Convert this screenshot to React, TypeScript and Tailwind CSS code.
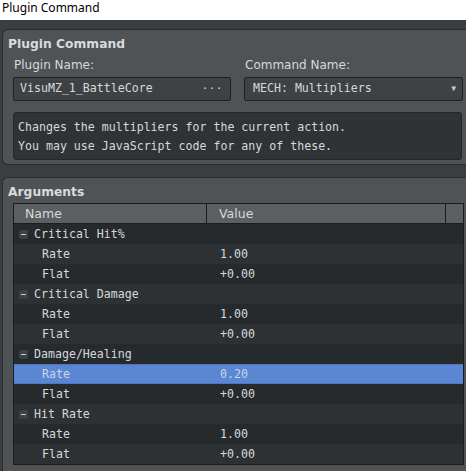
const ui = { fontFamily: '"DejaVu Sans", "Noto Sans", sans-serif' };
const mono = { fontFamily: '"DejaVu Sans Mono", "Liberation Mono", monospace' };

type Row = { name: string; value?: string; group?: boolean; selected?: boolean };

const rows: Row[] = [
  { name: 'Critical Hit%', group: true },
  { name: 'Rate', value: '1.00' },
  { name: 'Flat', value: '+0.00' },
  { name: 'Critical Damage', group: true },
  { name: 'Rate', value: '1.00' },
  { name: 'Flat', value: '+0.00' },
  { name: 'Damage/Healing', group: true },
  { name: 'Rate', value: '0.20', selected: true },
  { name: 'Flat', value: '+0.00' },
  { name: 'Hit Rate', group: true },
  { name: 'Rate', value: '1.00' },
  { name: 'Flat', value: '+0.00' },
];

const Collapse = () => (
  <span className="inline-flex h-[9px] w-[9px] items-center justify-center rounded-[2px] bg-[#3d4245] mr-[6px]">
    <span className="block h-[1px] w-[5px] bg-[#c9cdd0]" />
  </span>
);

export default function App() {
  return (
    <div className="w-[466px] h-[471px] overflow-hidden bg-[#3b3e41] text-[#d6d9db]">
      {/* window title */}
      <div className="h-[20px] bg-white text-black text-[12px] leading-[16px] pl-[2px]" style={{ fontFamily: '"Noto Sans", sans-serif' }}>
        Plugin Command
      </div>

      <div className="pt-[9px] pl-[2px]">
        {/* command group */}
        <div className="h-[136px] rounded-l-[6px] border border-r-0 border-[#2a2d30] bg-[#4f5356] pl-[10px] pr-[3px]" style={ui}>
          <div className="pt-[4px] -ml-[5px] text-[12.3px] font-bold leading-[20px] text-[#d8dbdd]">Plugin Command</div>
          <div className="mt-[1px] flex gap-[13px]">
            <div className="w-[218px]">
              <div className="text-[12px] leading-[20px] pl-[1px]">Plugin Name:</div>
              <div className="mt-[2px] h-[24px] rounded-[2px] border border-[#1e2022] bg-[#3e4245] flex items-center justify-between pl-[6px] pr-[7px] text-[11.6px]" style={mono}>
                <span>VisuMZ_1_BattleCore</span>
                <span className="text-[11px] tracking-[0.5px]">···</span>
              </div>
            </div>
            <div className="w-[219px]">
              <div className="text-[12px] leading-[20px] pl-[1px]">Command Name:</div>
              <div className="mt-[2px] h-[24px] rounded-[2px] border border-[#1e2022] bg-[#3e4245] flex items-center justify-between pl-[8px] pr-[6px] text-[11.6px]" style={mono}>
                <span>MECH: Multipliers</span>
                <span className="text-[8px] text-[#c4c8cb]">▼</span>
              </div>
            </div>
          </div>
          <div className="mt-[11px] mr-[1px] h-[48px] rounded-[3px] border border-[#25282a] bg-[#2f3336] pl-[4px] pt-[5px] text-[11.6px] leading-[19px]" style={mono}>
            <div>Changes the multipliers for the current action.</div>
            <div>You may use JavaScript code for any of these.</div>
          </div>
        </div>

        {/* arguments group */}
        <div className="mt-[12px] h-[300px] rounded-l-[6px] border border-r-0 border-[#2a2d30] bg-[#4f5356] pl-[10px] pr-[3px]" style={ui}>
          <div className="pt-[4px] -ml-[5px] text-[12.3px] font-bold leading-[20px] text-[#d8dbdd]">Arguments</div>
          <div className="mt-[1px] w-[451px] border border-[#1a1c1e] bg-[#272a2d]">
            <div className="flex h-[20px] bg-[#5b5f62] text-[12.5px] leading-[20px] border-b border-[#1a1c1e]">
              <div className="w-[193px] pl-[11px] border-r border-[#1a1c1e]">Name</div>
              <div className="w-[239px] pl-[12px] border-r border-[#1a1c1e]">Value</div>
              <div className="flex-1" />
            </div>
            {rows.map((r, i) => (
              <div
                key={i}
                className={
                  'flex h-[20px] items-center pt-[1px] text-[11.6px] ' +
                  (r.selected
                    ? 'bg-[#5a86d2] text-[#c9d6ea] border-y border-[#4c77c2]'
                    : i % 2 === 0
                      ? 'bg-[#272a2d]'
                      : 'bg-[#2d3134]')
                }
                style={mono}
              >
                <div className={'w-[193px] flex items-center ' + (r.group ? 'pl-[5px]' : 'pl-[28px]')}>
                  {r.group && <Collapse />}
                  {r.name}
                </div>
                <div className="pl-[13px]">{r.value}</div>
              </div>
            ))}
          </div>
        </div>
      </div>
    </div>
  );
}
